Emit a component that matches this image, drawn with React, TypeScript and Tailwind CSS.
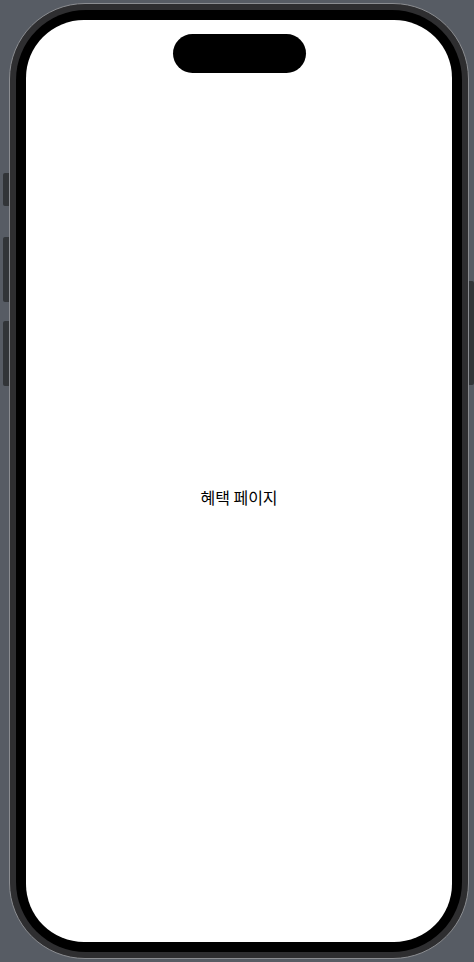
import React from "react";

export default function App() {
  return (
    <div className="w-[474px] h-[962px] bg-[#575c64] overflow-hidden flex items-start pt-[3px]">
      {/* left side buttons */}
      <div className="w-[9px] pl-[3px] pt-[170px] flex flex-col">
        <div className="w-[6px] h-[33px] rounded-l-[2px] bg-[#323538]" />
        <div className="w-[6px] h-[65px] mt-[31px] rounded-l-[2px] bg-[#323538]" />
        <div className="w-[6px] h-[65px] mt-[19px] rounded-l-[2px] bg-[#323538]" />
      </div>

      {/* phone */}
      <div className="w-[460px] h-[956px] rounded-[76px] border border-[#8b8d91] bg-[#2e2e30] p-[6px]">
        <div className="w-full h-full rounded-[70px] bg-black p-[10px]">
          <div className="w-full h-full rounded-[58px] bg-white overflow-hidden flex flex-col items-center">
            <div className="mt-[14px] w-[133px] h-[39px] rounded-full bg-black" />
            <div className="flex-1 w-full flex items-center justify-center pb-[21px]">
              <span
                className="text-[16px] text-black leading-none"
                style={{ fontFamily: '"Noto Sans CJK KR", "Noto Sans", sans-serif' }}
              >
                혜택 페이지
              </span>
            </div>
          </div>
        </div>
      </div>

      {/* right side button */}
      <div className="w-[5px] pt-[278px]">
        <div className="w-[5px] h-[104px] rounded-r-[2px] bg-[#323538]" />
      </div>
    </div>
  );
}
